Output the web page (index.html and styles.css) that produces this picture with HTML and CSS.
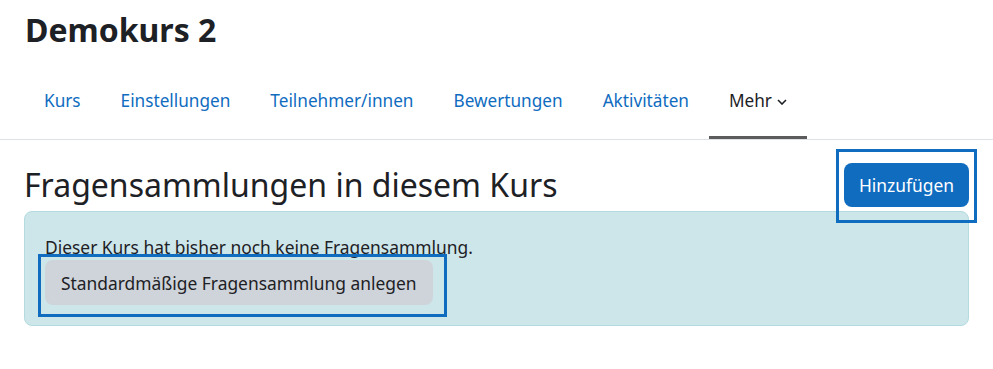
FILE: index.html
```html
<!DOCTYPE html>
<html lang="de">
<head>
  <meta charset="UTF-8">
  <title>Fragensammlungen</title>
  <link rel="stylesheet" href="styles.css">
</head>
<body>
  <header class="kopf">
    <h1 class="kurs-titel">Demokurs 2</h1>
  </header>

  <nav class="kurs-nav">
    <a class="nav-link" href="#">Kurs</a>
    <a class="nav-link" href="#">Einstellungen</a>
    <a class="nav-link" href="#">Teilnehmer/innen</a>
    <a class="nav-link" href="#">Bewertungen</a>
    <a class="nav-link" href="#">Aktivitäten</a>
    <a class="nav-link aktiv" href="#">Mehr
      <svg class="pfeil" viewBox="0 0 10 6" width="10" height="6"><path d="M1 1l4 4 4-4" fill="none" stroke="currentColor" stroke-width="1.6"/></svg>
    </a>
  </nav>

  <main class="inhalt">
    <div class="titel-zeile">
      <h2 class="seiten-titel">Fragensammlungen in diesem Kurs</h2>
      <span class="markiert">
        <button class="btn btn-blau">Hinzufügen</button>
        <span class="rahmen rahmen-rechts"></span>
      </span>
    </div>

    <div class="hinweis">
      <p class="hinweis-text">Dieser Kurs hat bisher noch keine Fragensammlung.</p>
      <span class="markiert">
        <button class="btn btn-grau">Standardmäßige Fragensammlung anlegen</button>
        <span class="rahmen rahmen-links"></span>
      </span>
    </div>
  </main>
</body>
</html>
```

FILE: styles.css
```css
body {
  margin: 0;
  font-family: "Noto Sans", "Liberation Sans", sans-serif;
  color: #1d2125;
  background: #fff;
}

.kopf {
  padding: 8px 25px 0;
}

.kurs-titel {
  margin: 0;
  font-size: 32px;
  font-weight: bold;
  line-height: 44px;
}

/* Kursnavigation */
.kurs-nav {
  display: flex;
  margin-top: 13px;
  padding-left: 24px;
  border-bottom: 1px solid #dee2e6;
}

.nav-link {
  display: flex;
  align-items: center;
  gap: 5px;
  height: 71px;
  padding: 0 20px;
  color: #0f6cbf;
  text-decoration: none;
  font-size: 17.2px;
  border-bottom: 3px solid transparent;
}

.nav-link.aktiv {
  color: #1d2125;
  border-bottom-color: #5c5c5c;
}

.pfeil {
  margin-top: 2px;
}

.inhalt {
  padding: 0 24px;
}

.titel-zeile {
  display: flex;
  justify-content: space-between;
  align-items: center;
  margin-top: 23px;
  margin-bottom: 4px;
}

.seiten-titel {
  margin: 0;
  font-size: 32px;
  font-weight: normal;
  line-height: 40px;
}

.btn {
  font-family: inherit;
  font-size: 17.4px;
  border: none;
  border-radius: 8px;
  cursor: pointer;
}

.btn-blau {
  height: 44px;
  padding: 0 15px;
  color: #fff;
  background: #0f6cbf;
}

.btn-grau {
  display: block;
  height: 45px;
  padding: 0 16px;
  color: #1d2125;
  background: #ced4da;
}

/* blaue Markierungsrahmen */
.markiert {
  position: relative;
  display: inline-block;
}

.rahmen {
  position: absolute;
  border: 3px solid #0f6cbf;
  pointer-events: none;
}

.rahmen-rechts {
  top: -14px;
  bottom: -16px;
  left: -8px;
  right: -8px;
}

.rahmen-links {
  top: -6px;
  bottom: -12px;
  left: -7px;
  right: -14px;
}

.hinweis {
  padding: 23px 20px 20px;
  background: #cde6ea;
  border: 1px solid #b3dbe0;
  border-radius: 8px;
}

.hinweis-text {
  margin: 0 0 1px;
  font-size: 17.4px;
  line-height: 24px;
}
```
